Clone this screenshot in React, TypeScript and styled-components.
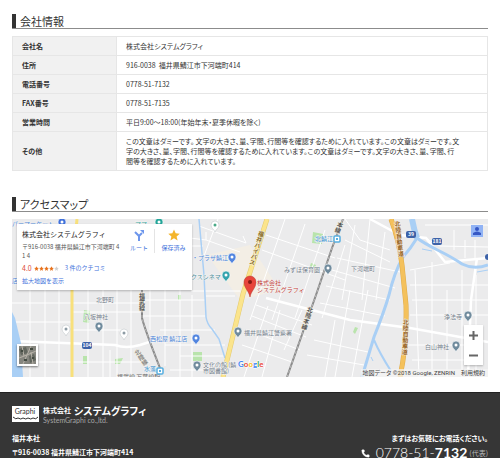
import React from "react";
import styled, { createGlobalStyle } from "styled-components";
import { Phone } from "lucide-react";

const GlobalStyle = createGlobalStyle`
  * { box-sizing: border-box; }
  body {
    margin: 0;
    background: #fff;
    color: #333;
    font-family: "Noto Sans CJK JP", "Noto Sans", sans-serif;
    font-size: 7px;
    line-height: 10px;
    overflow: hidden;
  }
  a { color: inherit; text-decoration: none; }
  button { border: 0; padding: 0; font: inherit; cursor: pointer; }
`;

const Page = styled.div`
  display: flex;
  flex-direction: column;
  min-height: 100vh;
`;

const Main = styled.main`
  display: flex;
  flex-direction: column;
  gap: 26px;
  padding: 14px 12px 15px;
`;

const Section = styled.section`
  display: flex;
  flex-direction: column;
  gap: 8px;
`;

const Heading = styled.h2`
  margin: 0;
  padding-left: 4px;
  border-left: 4px solid #333;
  box-shadow: 0 1px 0 #8c8c8c;
  font-size: 11px;
  line-height: 14px;
  font-weight: 400;
  font-feature-settings: "palt";
`;

const InfoTable = styled.table`
  width: 100%;
  border-collapse: collapse;
  font-feature-settings: "palt";
  th, td {
    height: 19px;
    padding: 4px 9px;
    border: 1px solid #e6e6e6;
    text-align: left;
    vertical-align: middle;
  }
  th {
    width: 104px;
    background: #f1f1f1;
    font-weight: 700;
  }
`;

const Line = styled.span`
  display: block;
  white-space: pre;
`;

const MapFrame = styled.div`
  position: relative;
  height: 158px;
  overflow: hidden;
  background: #ebebeb;
  color: #555;
  font-size: 6px;
  line-height: 8px;
`;

const MapDrawing = styled.svg`
  display: block;
  width: 100%;
  height: 100%;
  font-size: 6px;
`;

const PlaceCard = styled.div`
  position: absolute;
  top: 5px;
  left: 5px;
  display: flex;
  width: 175px;
  height: 66px;
  padding: 5px 0 5px 5px;
  background: #fff;
  box-shadow: 0 1px 2px rgba(0, 0, 0, 0.25);
`;

const PlaceInfo = styled.div`
  display: flex;
  flex-direction: column;
  width: 102px;
`;

const PlaceName = styled.strong`
  color: #222;
  font-size: 7px;
  line-height: 11px;
  font-weight: 400;
`;

const PlaceAddress = styled.span`
  line-height: 9px;
  padding: 2px 0 3px;
  white-space: nowrap;
`;

const Rating = styled.div`
  display: flex;
  align-items: center;
  gap: 2px;
  height: 9px;
  margin-bottom: 5px;
  color: #dd4b39;
  font-size: 7px;
  a { color: #4272db; font-size: 6px; margin-left: 4px; }
`;

const MapLink = styled.a`
  color: #4272db;
`;

const CardAction = styled.button<{ $divided?: boolean }>`
  display: flex;
  flex-direction: column;
  align-items: center;
  gap: 3px;
  width: ${(p) => (p.$divided ? 38 : 30)}px;
  height: 24px;
  border-left: ${(p) => (p.$divided ? "1px solid #e4e4e4" : "0")};
  background: none;
  color: #4272db;
  white-space: nowrap;
`;

const Account = styled.button`
  position: absolute;
  top: 6px;
  right: 5px;
  display: flex;
  align-items: center;
  justify-content: center;
  width: 12px;
  height: 12px;
  background: #91b3f5;
`;

const ZoomControl = styled.div`
  position: absolute;
  right: 5px;
  bottom: 12px;
  display: flex;
  flex-direction: column;
  width: 19px;
  background: #fff;
  box-shadow: 0 1px 2px rgba(0, 0, 0, 0.25);
`;

const ZoomButton = styled.button`
  display: flex;
  align-items: center;
  justify-content: center;
  height: 20px;
  background: none;
`;

const SatelliteButton = styled.button`
  position: absolute;
  left: 5px;
  bottom: 11px;
  width: 21px;
  height: 22px;
  border: 2px solid #fff;
  box-shadow: 0 1px 2px rgba(0, 0, 0, 0.5);
  svg { display: block; }
`;

const Credits = styled.div`
  position: absolute;
  right: 0;
  bottom: 0;
  display: flex;
  gap: 6px;
  padding: 0 3px 0 2px;
  background: rgba(245, 245, 245, 0.7);
  color: #444;
  font-family: Roboto, "Noto Sans CJK JP", sans-serif;
  font-feature-settings: "palt";
`;

const Footer = styled.footer`
  display: flex;
  flex: 1;
  flex-direction: column;
  gap: 8px;
  padding: 12px 12px 0;
  border-top: 1px solid #222;
  background: #363636;
  color: #fff;
  font-feature-settings: "palt";
`;

const Brand = styled.a`
  display: flex;
  align-items: center;
  gap: 4px;
  height: 18px;
`;

const BrandText = styled.span`
  display: flex;
  flex-direction: column;
`;

const CompanyName = styled.span`
  display: flex;
  align-items: center;
  gap: 3px;
  height: 11px;
  font-size: 7px;
  font-weight: 700;
  b { font-size: 10px; line-height: 11px; font-weight: 700; }
`;

const EnglishName = styled.span`
  color: #a6a6a6;
  font-family: Lato, sans-serif;
  font-size: 7px;
  line-height: 8px;
  font-weight: 400;
`;

const FooterRow = styled.div`
  display: flex;
  justify-content: space-between;
  font-weight: 700;
`;

const Address = styled.address`
  font-style: normal;
  line-height: 14px;
`;

const Contact = styled.div`
  display: flex;
  flex-direction: column;
  align-items: flex-end;
  line-height: 14px;
`;

const Tel = styled.a`
  display: flex;
  align-items: center;
  font-family: Lato, sans-serif;
  font-size: 14px;
  line-height: 16px;
  font-weight: 300;
  svg { margin-right: 6px; }
  b { font-weight: 700; }
  small {
    margin-left: 2px;
    font: 400 7px "Noto Sans CJK JP", sans-serif;
    color: #bbb;
  }
`;

const rows: [string, string[]][] = [
  ["会社名", ["株式会社システムグラフィ"]],
  ["住所", ["916-0038  福井県鯖江市下河端町414"]],
  ["電話番号", ["0778-51-7132"]],
  ["FAX番号", ["0778-51-7135"]],
  ["営業時間", ["平日9:00～18:00(年始年末・夏季休暇を除く)"]],
  [
    "その他",
    [
      "この文章はダミーです。 文字の大きさ、量、字間、行間等を確認するために入れています。この文章はダミーです。文",
      "字の大きさ、量、字間、行間等を確認するために入れています。この文章はダミーです。文字の大きさ、量、字間、行",
      "間等を確認するために入れています。",
    ],
  ],
];

const minorRoads = [
  "M30 290V377M45 290V377M59 290V377M88 290V377M103 290V377M117 290V377M131 290V377",
  "M12 303H142M12 322H72M12 362H72M72 312H140M72 330H122M72 362H150M110 350V377",
  "M190 238L206 240L206 232M199 226L246 243L243 236M206 240L240 252M191 246H203M191 291H240M206 296H235",
  "M150 290V330M165 290V366M180 290V377M192 295V377M142 300H205M142 316H206M160 330H215M165 345H225M180 356H224M170 370H222",
  "M218 219L204 256M285 219L250 320M305 224L272 320M325 230L295 318M345 245L322 318M266 235L335 258M262 250L345 280M256 305L312 325M252 316L306 337M248 330L300 350M242 345L292 362M280 310L262 377M268 306L244 377M302 310L284 350",
  "M345 219L360 240L390 250M345 240L390 262M337 258L400 272M332 270L395 288M326 286L390 300M320 303L385 316M355 225L342 300M370 219L362 300M385 232L376 300M350 290L335 377M368 290L352 377M335 320L325 377M314 340L368 352M307 355L364 365",
  "M410 270L450 263M410 285H488M412 300H488M415 270L419 377M432 262V377M447 290V377M462 270V377M476 275V377M410 315H488M408 345H464M412 360H464M425 238L440 246L488 247M454 230V250M465 240V258M475 240V258M425 225H488",
];

const Label = ({
  x, y, children, color = "#75818d", size = 6, weight = 400,
}: {
  x: number; y: number; children: React.ReactNode; color?: string; size?: number; weight?: number;
}) => (
  <text x={x} y={y} fill={color} fontSize={size} fontWeight={weight} stroke="#f4f4f4" strokeWidth="1" paintOrder="stroke">
    {children}
  </text>
);

const VerticalText = styled.text`
  writing-mode: vertical-rl;
  font-weight: 700;
`;

const Upright = ({ x, y, angle = 0, color, children }: {
  x: number; y: number; angle?: number; color: string; children: string;
}) => (
  <VerticalText
    fill={color}
    stroke="#f6f2e6"
    strokeWidth="1"
    paintOrder="stroke"
    transform={`translate(${x} ${y}) rotate(${angle})`}
  >
    {children}
  </VerticalText>
);

const Pin = ({ x, y, color, inner = "#fff" }: { x: number; y: number; color: string; inner?: string }) => (
  <g transform={`translate(${x} ${y})`}>
    <path
      d="M0 6C-1 3-4 2.500-4 -1A4 4 0 0 1 4 -1C4 2.500 1 3 0 6Z"
      fill={color}
      stroke={color === "#fff" ? "#c4c9cc" : "#fff"}
      strokeWidth=".6"
    />
    <circle cy={-1} r={1.500} fill={inner} />
  </g>
);

const Badge = ({ x, y, n }: { x: number; y: number; n: string }) => (
  <g>
    <rect x={x - 5} y={y - 3} width="10" height="7" rx="2" fill="#3d62a8" />
    <text x={x} y={y + 2} textAnchor="middle" fontSize="5" fontWeight="700" fill="#fff">{n}</text>
  </g>
);

const Station = ({ x, y }: { x: number; y: number }) => (
  <g>
    <rect x={x - 3} y={y - 3} width="6" height="6" rx="1" fill="#fff" stroke="#58afe0" strokeWidth="1.500" />
    <rect x={x - 1} y={y - 1} width="2" height="2" fill="#58afe0" />
  </g>
);

const blue = "#4d86d9";
const slate = "#708b9d";

const StreetMap = () => (
  <MapDrawing viewBox="12 219 476 158" preserveAspectRatio="xMidYMid slice" role="img" aria-label="アクセスマップ">
    <rect x="12" y="219" width="476" height="158" fill="#ebebec" />
    <path d="M207 255L250 245L280 290L240 300Z" fill="#f3eee5" />
    <g fill="#b9e4ac">
      <path d="M313 232l10 2-1 10-10-1zM311 263l5 2-3 7-4-3zM193 352h9v9h-9zM84 310l6 1-1 12-6-1zM83 356h4v8h-4zM115 359l8-1-3 6h-5zM355 327l3 1-3 6-2-2zM178 295h3v5h-3z" />
    </g>
    <g fill="none" stroke="#fff" strokeWidth="1">
      {minorRoads.map((d) => <path key={d} d={d} />)}
    </g>
    <g fill="none" stroke="#fff" strokeWidth="2.500">
      <path d="M12 341L115 345Q126 349 140 345L165 337" />
      <path d="M266 298L350 320L410 328L488 342" />
      <path d="M370 219L400 235L426 238L445 262L488 258" />
      <path d="M477 258L471 300L468 377" />
    </g>
    <g fill="none" stroke="#a9cff5">
      <path d="M12 312L15 318L21 343L23 377H12Z" fill="#a9cff5" stroke="none" />
      <path d="M199 219L204 275L206 317Q207 324 212 329L219 339L225 358" strokeWidth="1.500" />
      <path d="M412 219Q414 230 417 238C430 248 445 252 462 264Q474 270 488 265" strokeWidth="3" />
      <path d="M412 219Q414 230 417 238" strokeWidth="6" />
      <path d="M417 238Q411 248 403 257Q394 273 389 295Q384 312 374 337L362 377" strokeWidth="3" />
      <path d="M374 340Q380 354 391 371" strokeWidth="2" />
      <path d="M422 249L432 251M477 272L488 270M371 357L373 361" strokeWidth="1" />
    </g>
    <g fill="none">
      <path d="M77 219Q73 255 72 290V377" stroke="#f8e07b" strokeWidth="3" />
      <path d="M267 219L243 294L223 377" stroke="#e3ca70" strokeWidth="5" />
      <path d="M267 219L243 294L223 377" stroke="#fbe48c" strokeWidth="4" />
      <path d="M391 219Q399 240 402 265L406 305Q407 345 400 377" stroke="#e0ab48" strokeWidth="5" />
      <path d="M391 219Q399 240 402 265L406 305Q407 345 400 377" stroke="#f4c15c" strokeWidth="4" />
      <path d="M142 290V318Q145 330 160 368M343 219L332 248L316 295L287 377" stroke="#888" strokeWidth="2" />
      <path d="M142 290V318Q145 330 160 368M343 219L332 248L316 295L287 377" stroke="#b9b9b9" strokeWidth="1" strokeDasharray="3 2" />
    </g>
    <Upright x={262} y={231} angle={17} color="#8a6b22">福井バイパス</Upright>
    <Upright x={397} y={221} angle={-7} color="#98631c">北陸自動車道</Upright>
    <Upright x={406} y={319} angle={2} color="#98631c">北陸自動車道</Upright>
    <Upright x={311} y={307} angle={18} color="#555">北陸本線</Upright>
    <Upright x={341} y={222} angle={20} color="#555">本線</Upright>
    <Upright x={142} y={293} color="#555">福武線</Upright>
    <Upright x={136} y={350} angle={-35} color="#888">北陸線</Upright>
    <Label x={12} y={226} color={blue}>パーマーケット</Label>
    <Label x={135} y={226} color="#3aa7a0">ママ</Label>
    <Label x={12} y={283} color={blue}>店</Label>
    <Label x={192} y={260} color={blue}>・プラザ鯖江</Label>
    <Label x={191} y={279} color="#4d8f9d">クスシネマ</Label>
    <Label x={315} y={241} color="#3a91cf">北鯖江</Label>
    <Label x={284} y={272}>みずほ保育園</Label>
    <Label x={351} y={271}>下河端町</Label>
    <Label x={96} y={302}>北野町</Label>
    <Label x={84} y={319}>八坂神社</Label>
    <Label x={150} y={341} color={blue}>西松屋 鯖江店</Label>
    <Label x={244} y={335}>福井県鯖江警察署</Label>
    <Label x={203} y={367}>文化の館 (鯖</Label>
    <Label x={203} y={373}>市図書館)</Label>
    <Label x={144} y={371} color="#3a91cf">水落</Label>
    <Label x={117} y={379} color="#666">福武線 万葉線駅</Label>
    <Label x={444} y={319}>浄法寺</Label>
    <Label x={425} y={349}>白山神社</Label>
    <Pin x={62} y={223} color="#4272db" />
    <Pin x={159} y={223} color="#26a69a" />
    <Pin x={215} y={226} color="#fff" inner="#49a987" />
    <Pin x={232} y={258} color="#5285df" />
    <Pin x={226} y={276} color="#34a4ad" />
    <Pin x={328} y={269} color={slate} />
    <Pin x={99} y={327} color={slate} />
    <Pin x={66} y={330} color="#fff" inner="#8e9ca5" />
    <Pin x={124} y={334} color="#fff" inner="#8e9ca5" />
    <Pin x={196} y={339} color="#5285df" />
    <Pin x={238} y={332} color={slate} />
    <Pin x={197} y={366} color={slate} />
    <Pin x={468} y={316} color={slate} />
    <Pin x={456} y={346} color={slate} />
    <Badge x={87} y={345} n="104" />
    <Badge x={411} y={234} n="39" />
    <Badge x={437} y={241} n="181" />
    <circle cx="488" cy="257" r="3" fill="#3d62a8" />
    <Station x={337} y={239} />
    <Station x={160} y={371} />
    <path d="M250 297C249 291 244 288 244 282A6 6 0 0 1 256 282C256 288 251 291 250 297Z" fill="#e8453b" stroke="#b33127" strokeWidth=".5" />
    <circle cx="250" cy="282" r="2" fill="#861a14" />
    <Label x={257} y={285} color="#c5423b">株式会社</Label>
    <Label x={257} y={292} color="#c5423b">システムグラフィ</Label>
    <text x="238" y="367" fontFamily="Lato, sans-serif" fontSize="8" fontWeight="700" stroke="#fff" strokeWidth="1" paintOrder="stroke">
      <tspan fill="#4285f4">G</tspan><tspan fill="#ea4335">o</tspan><tspan fill="#fbbc05">o</tspan><tspan fill="#4285f4">g</tspan><tspan fill="#34a853">l</tspan><tspan fill="#ea4335">e</tspan>
    </text>
  </MapDrawing>
);

const Star = ({ size, color }: { size: number; color: string }) => (
  <svg width={size} height={size} viewBox="0 0 24 24" fill={color}>
    <path d="M12 1l3.300 7.700 8.200.7-6.300 5.400 2 8.200L12 18.600 4.800 23l2-8.200L.5 9.400l8.200-.7z" />
  </svg>
);

export default function App() {
  return (
    <>
      <GlobalStyle />
      <Page lang="ja">
        <Main>
          <Section>
            <Heading>会社情報</Heading>
            <InfoTable>
              <tbody>
                {rows.map(([name, lines]) => (
                  <tr key={name}>
                    <th scope="row">{name}</th>
                    <td>{lines.map((line) => <Line key={line}>{line}</Line>)}</td>
                  </tr>
                ))}
              </tbody>
            </InfoTable>
          </Section>
          <Section>
            <Heading>アクセスマップ</Heading>
            <MapFrame>
              <StreetMap />
              <PlaceCard>
                <PlaceInfo>
                  <PlaceName>株式会社システムグラフィ</PlaceName>
                  <PlaceAddress>〒916-0038 福井県鯖江市下河端町 4<br />1 4</PlaceAddress>
                  <Rating>
                    4.0
                    <span>
                      {[0, 1, 2, 3, 4].map((i) => (
                        <Star key={i} size={5} color={i < 4 ? "#e7711b" : "#d0d0d0"} />
                      ))}
                    </span>
                    <a href="#reviews">3 件のクチコミ</a>
                  </Rating>
                  <MapLink href="#map">拡大地図を表示</MapLink>
                </PlaceInfo>
                <CardAction>
                  <svg width="12" height="12" viewBox="0 0 12 12" fill="none" stroke="#6d96ec" strokeWidth="2">
                    <path d="M6 12V7L2 3M6 7L9 4" />
                    <path d="M7 1h4v4z" fill="#6d96ec" stroke="none" />
                  </svg>
                  ルート
                </CardAction>
                <CardAction $divided>
                  <Star size={12} color="#f4b52c" />
                  保存済み
                </CardAction>
              </PlaceCard>
              <Account aria-label="アカウント">
                <svg width="8" height="8" viewBox="0 0 8 8" fill="#3557c4">
                  <circle cx="4" cy="2" r="2" />
                  <path d="M0 8V6Q4 3 8 6V8Z" />
                </svg>
              </Account>
              <SatelliteButton aria-label="航空写真">
                <svg width="17" height="18" viewBox="0 0 17 18">
                  <rect width="17" height="18" fill="#85857e" />
                  <path d="M0 3L7 1L9 7L2 9ZM10 10L15 8L17 14L11 17Z" fill="#62665e" />
                  <path d="M0 12L8 9L12 0M4 18L8 9L17 5M3 0L5 10M12 6L14 18" stroke="#b8b3a8" fill="none" />
                  <path d="M2 5h2M11 3h3M5 14h3M13 12h2" stroke="#444b42" strokeWidth="2" />
                </svg>
              </SatelliteButton>
              <ZoomControl>
                <ZoomButton aria-label="拡大">
                  <svg width="9" height="9" stroke="#666" strokeWidth="2"><path d="M0 4.500H9M4.500 0V9" /></svg>
                </ZoomButton>
                <ZoomButton aria-label="縮小">
                  <svg width="9" height="9" stroke="#666" strokeWidth="2"><path d="M0 4.500H9" /></svg>
                </ZoomButton>
              </ZoomControl>
              <Credits>
                <span>地図データ ©2018 Google, ZENRIN</span>
                <a href="#terms">利用規約</a>
              </Credits>
            </MapFrame>
          </Section>
        </Main>
        <Footer>
          <Brand href="#top">
            <svg width="27" height="16" viewBox="0 0 27 16">
              <rect width="27" height="16" fill="#fff" />
              <text x="13" y="8" textAnchor="middle" fontFamily="Lato, sans-serif" fontSize="7" fill="#333">Graphi</text>
              <path d="M1 11q3 3 5 1q3 2 5 0q3 2 5 0q3 2 5 0q3 2 5-1" fill="none" stroke="#333" />
            </svg>
            <BrandText>
              <CompanyName>株式会社 <b>システムグラフィ</b></CompanyName>
              <EnglishName>SystemGraphi co.,ltd.</EnglishName>
            </BrandText>
          </Brand>
          <FooterRow>
            <Address>
              福井本社<br />〒916-0038 福井県鯖江市下河端町414
            </Address>
            <Contact>
              まずはお気軽にお電話ください。
              <Tel href="tel:0778517132">
                <Phone size={9} fill="#fff" strokeWidth={1} />
                0778-51-<b>7132</b><small>(代表)</small>
              </Tel>
            </Contact>
          </FooterRow>
        </Footer>
      </Page>
    </>
  );
}
